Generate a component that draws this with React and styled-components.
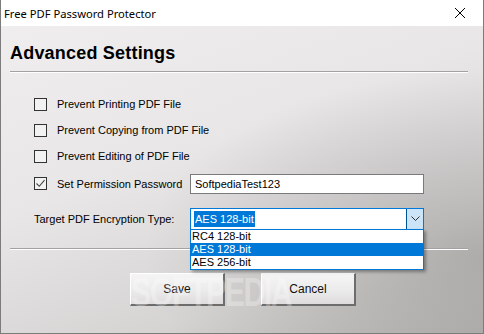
import React from 'react';
import styled, {createGlobalStyle} from 'styled-components';

const GlobalStyle = createGlobalStyle`
    html, body {
        margin: 0;
        padding: 0;
        background: #ffffff;
    }
    * {
        box-sizing: border-box;
    }
`;

const Window = styled.div`
    width: 484px;
    height: 334px;
    display: flex;
    flex-direction: column;
    border: 1px solid #7c7c7c;
    border-top: none;
    overflow: hidden;
    font-family: "Liberation Sans", Arial, sans-serif;
    color: #000;
`;

const TitleBar = styled.div`
    height: 26px;
    flex: none;
    display: flex;
    align-items: center;
    justify-content: space-between;
    padding: 0 0 0 3px;
    background: #ffffff;
    font-family: "Noto Sans", "Open Sans", sans-serif;
    font-size: 11.2px;
`;

const CloseButton = styled.div`
    width: 46px;
    height: 26px;
    display: flex;
    align-items: center;
    justify-content: center;
`;

const Body = styled.div`
    position: relative;
    flex: 1;
    padding: 0 15px 0 9px;
    background:
        radial-gradient(ellipse 70% 60% at 100% 75%, rgba(150,148,147,0.55), rgba(150,148,147,0) 100%),
        linear-gradient(160deg, #efeded 0%, #e8e6e6 40%, #d6d4d3 75%, #b9b7b6 100%);
`;

const Heading = styled.h1`
    margin: 0;
    padding: 16px 0 0 0;
    height: 45px;
    font-size: 18px;
    line-height: 22px;
    font-weight: bold;
    letter-spacing: 0.2px;
`;

const Separator = styled.div`
    height: 2px;
    border-top: 1px solid #a3a1a1;
    border-bottom: 1px solid #ffffff;
`;

const Options = styled.div`
    display: flex;
    flex-direction: column;
    padding: 18px 0 0 24px;
    font-size: 11px;
`;

const Row = styled.div`
    display: flex;
    align-items: center;
    height: ${p => p.h || 26}px;
`;

const Box = styled.div`
    width: 13px;
    height: 13px;
    flex: none;
    border: 1px solid #333333;
    background: #f3f2f2;
    display: flex;
    align-items: center;
    justify-content: center;
    margin-right: 10px;
`;

const Label = styled.span`
    width: ${p => p.w ? `${p.w}px` : 'auto'};
    flex: none;
    white-space: nowrap;
`;

const TextBox = styled.div`
    width: 234px;
    height: 20px;
    border: 1px solid #7a7a7a;
    background: #ffffff;
    padding: 0 0 0 4px;
    display: flex;
    align-items: center;
    font-size: 11px;
`;

const ComboWrap = styled.div`
    position: relative;
`;

const Combo = styled.div`
    width: 234px;
    height: 22px;
    border: 1px solid #0078d7;
    background: #ffffff;
    display: flex;
    align-items: center;
    padding: 0 0 0 3px;
`;

const SelectedText = styled.span`
    background: #0078d7;
    color: #ffffff;
    padding: 2px 1px;
    line-height: 12px;
`;

const DropButton = styled.div`
    margin-left: auto;
    width: 17px;
    height: 20px;
    background: #cce4f7;
    border-left: 1px solid #005499;
    display: flex;
    align-items: center;
    justify-content: center;
`;

const DropList = styled.div`
    position: absolute;
    left: 0;
    top: 21px;
    width: 234px;
    border: 1px solid #0078d7;
    background: #ffffff;
    box-shadow: 2px 2px 3px rgba(0,0,0,0.35);
    z-index: 2;
`;

const Item = styled.div`
    height: 13px;
    line-height: 13px;
    padding-left: 1px;
    font-size: 11px;
    background: ${p => p.active ? '#0078d7' : 'transparent'};
    color: ${p => p.active ? '#ffffff' : '#000000'};
`;

const LowerSeparator = styled(Separator)`
    margin-top: 9px;
`;

const Buttons = styled.div`
    display: flex;
    justify-content: center;
    gap: 36px;
    padding: 23px 0 0 8px;
`;

const Button = styled.div`
    width: 95px;
    height: 33px;
    display: flex;
    align-items: center;
    justify-content: center;
    font-family: "Liberation Sans", Arial, sans-serif;
    font-size: 12px;
    color: #111;
    background: linear-gradient(180deg, #f6f5f5 0%, #ecebeb 55%, #dedcdc 100%);
    border-top: 1px solid #ffffff;
    border-left: 1px solid #ffffff;
    border-right: 2px solid #6e6d6d;
    border-bottom: 2px solid #6e6d6d;
`;

const Watermark = styled.div`
    position: absolute;
    left: 130px;
    top: 246px;
    font-family: "Liberation Sans", Arial, sans-serif;
    font-weight: bold;
    font-size: 41px;
    line-height: 41px;
    letter-spacing: -2px;
    transform: scaleX(0.74);
    transform-origin: left top;
    color: rgba(255,255,255,0.28);
    pointer-events: none;
`;

const Check = () => (
    <svg width="11" height="11" viewBox="0 0 11 11">
        <path d="M1.5 5.5 L4.3 8.3 L9.5 2.2" fill="none" stroke="#444" strokeWidth="1.1" />
    </svg>
);

const Chevron = () => (
    <svg width="9" height="5" viewBox="0 0 9 5">
        <path d="M0.5 0.5 L4.5 4.5 L8.5 0.5" fill="none" stroke="#333" strokeWidth="1" />
    </svg>
);

const CloseIcon = () => (
    <svg width="12" height="12" viewBox="0 0 12 12">
        <path d="M1 1 L11 11 M11 1 L1 11" stroke="#000" strokeWidth="1" />
    </svg>
);

const options = [
    'Prevent Printing PDF File',
    'Prevent Copying from PDF File',
    'Prevent Editing of PDF File',
];

export default function App() {
    return (
        <>
            <GlobalStyle />
            <Window>
                <TitleBar>
                    <span>Free PDF Password Protector</span>
                    <CloseButton><CloseIcon /></CloseButton>
                </TitleBar>
                <Body>
                    <Heading>Advanced Settings</Heading>
                    <Separator />
                    <Options>
                        {options.map(o => (
                            <Row key={o}>
                                <Box />
                                <Label>{o}</Label>
                            </Row>
                        ))}
                        <Row h={29}>
                            <Box><Check /></Box>
                            <Label w={133}>Set Permission Password</Label>
                            <TextBox>SoftpediaTest123</TextBox>
                        </Row>
                        <Row h={41}>
                            <Label w={156}>Target PDF Encryption Type:</Label>
                            <ComboWrap>
                                <Combo>
                                    <SelectedText>AES 128-bit</SelectedText>
                                    <DropButton><Chevron /></DropButton>
                                </Combo>
                                <DropList>
                                    <Item>RC4 128-bit</Item>
                                    <Item active>AES 128-bit</Item>
                                    <Item>AES 256-bit</Item>
                                </DropList>
                            </ComboWrap>
                        </Row>
                    </Options>
                    <LowerSeparator />
                    <Buttons>
                        <Button>Save</Button>
                        <Button>Cancel</Button>
                    </Buttons>
                    <Watermark>SOFTPEDIA</Watermark>
                </Body>
            </Window>
        </>
    );
}
